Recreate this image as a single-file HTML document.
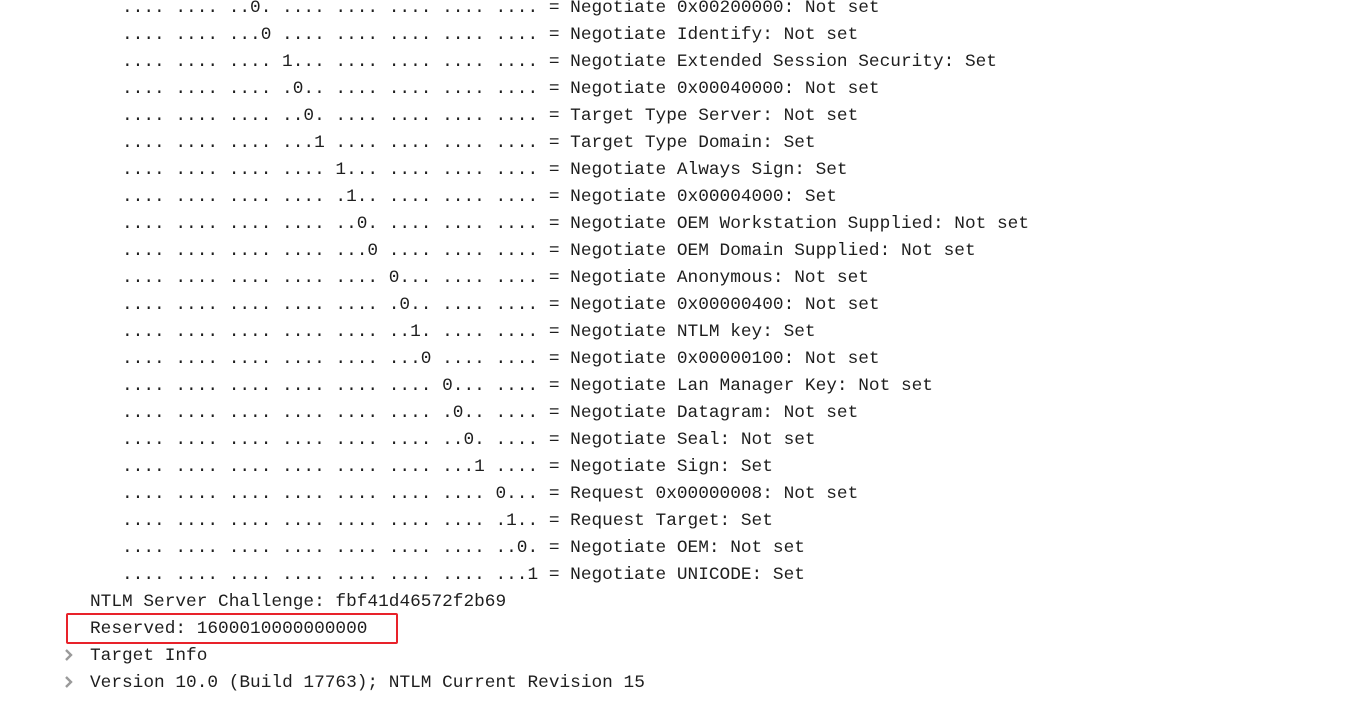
<!DOCTYPE html>
<html><head><style>
body{margin:0;width:1358px;height:715px;background:#fff;overflow:hidden;position:relative;font-family:"Liberation Mono",monospace;font-size:17.8px;color:#1e1e1e}
.l{position:absolute;height:27px;line-height:27px;white-space:pre}
.box{position:absolute;left:66px;top:613px;width:328px;height:27px;border:2px solid #e8222a;border-radius:2px}
.chev{position:absolute;left:63px;width:12px;height:16px}
</style></head><body>
<div style="position:absolute;left:0;top:-5px">
<div class="l" style="left:122px;top:0">.... .... ..0. .... .... .... .... .... = Negotiate 0x00200000: Not set</div>
<div class="l" style="left:122px;top:27px">.... .... ...0 .... .... .... .... .... = Negotiate Identify: Not set</div>
<div class="l" style="left:122px;top:54px">.... .... .... 1... .... .... .... .... = Negotiate Extended Session Security: Set</div>
<div class="l" style="left:122px;top:81px">.... .... .... .0.. .... .... .... .... = Negotiate 0x00040000: Not set</div>
<div class="l" style="left:122px;top:108px">.... .... .... ..0. .... .... .... .... = Target Type Server: Not set</div>
<div class="l" style="left:122px;top:135px">.... .... .... ...1 .... .... .... .... = Target Type Domain: Set</div>
<div class="l" style="left:122px;top:162px">.... .... .... .... 1... .... .... .... = Negotiate Always Sign: Set</div>
<div class="l" style="left:122px;top:189px">.... .... .... .... .1.. .... .... .... = Negotiate 0x00004000: Set</div>
<div class="l" style="left:122px;top:216px">.... .... .... .... ..0. .... .... .... = Negotiate OEM Workstation Supplied: Not set</div>
<div class="l" style="left:122px;top:243px">.... .... .... .... ...0 .... .... .... = Negotiate OEM Domain Supplied: Not set</div>
<div class="l" style="left:122px;top:270px">.... .... .... .... .... 0... .... .... = Negotiate Anonymous: Not set</div>
<div class="l" style="left:122px;top:297px">.... .... .... .... .... .0.. .... .... = Negotiate 0x00000400: Not set</div>
<div class="l" style="left:122px;top:324px">.... .... .... .... .... ..1. .... .... = Negotiate NTLM key: Set</div>
<div class="l" style="left:122px;top:351px">.... .... .... .... .... ...0 .... .... = Negotiate 0x00000100: Not set</div>
<div class="l" style="left:122px;top:378px">.... .... .... .... .... .... 0... .... = Negotiate Lan Manager Key: Not set</div>
<div class="l" style="left:122px;top:405px">.... .... .... .... .... .... .0.. .... = Negotiate Datagram: Not set</div>
<div class="l" style="left:122px;top:432px">.... .... .... .... .... .... ..0. .... = Negotiate Seal: Not set</div>
<div class="l" style="left:122px;top:459px">.... .... .... .... .... .... ...1 .... = Negotiate Sign: Set</div>
<div class="l" style="left:122px;top:486px">.... .... .... .... .... .... .... 0... = Request 0x00000008: Not set</div>
<div class="l" style="left:122px;top:513px">.... .... .... .... .... .... .... .1.. = Request Target: Set</div>
<div class="l" style="left:122px;top:540px">.... .... .... .... .... .... .... ..0. = Negotiate OEM: Not set</div>
<div class="l" style="left:122px;top:567px">.... .... .... .... .... .... .... ...1 = Negotiate UNICODE: Set</div>
<div class="l" style="left:90px;top:594px">NTLM Server Challenge: fbf41d46572f2b69</div>
<div class="l" style="left:90px;top:621px">Reserved: 1600010000000000</div>
<div class="l" style="left:90px;top:648px">Target Info</div>
<div class="l" style="left:90px;top:675px">Version 10.0 (Build 17763); NTLM Current Revision 15</div>
</div>
<div class="box"></div>
<svg class="chev" style="top:647px" viewBox="0 0 12 16"><path d="M3 3l5 5-5 5" fill="none" stroke="#9a9a9a" stroke-width="2.4"/></svg>
<svg class="chev" style="top:674px" viewBox="0 0 12 16"><path d="M3 3l5 5-5 5" fill="none" stroke="#9a9a9a" stroke-width="2.4"/></svg>
</body></html>
